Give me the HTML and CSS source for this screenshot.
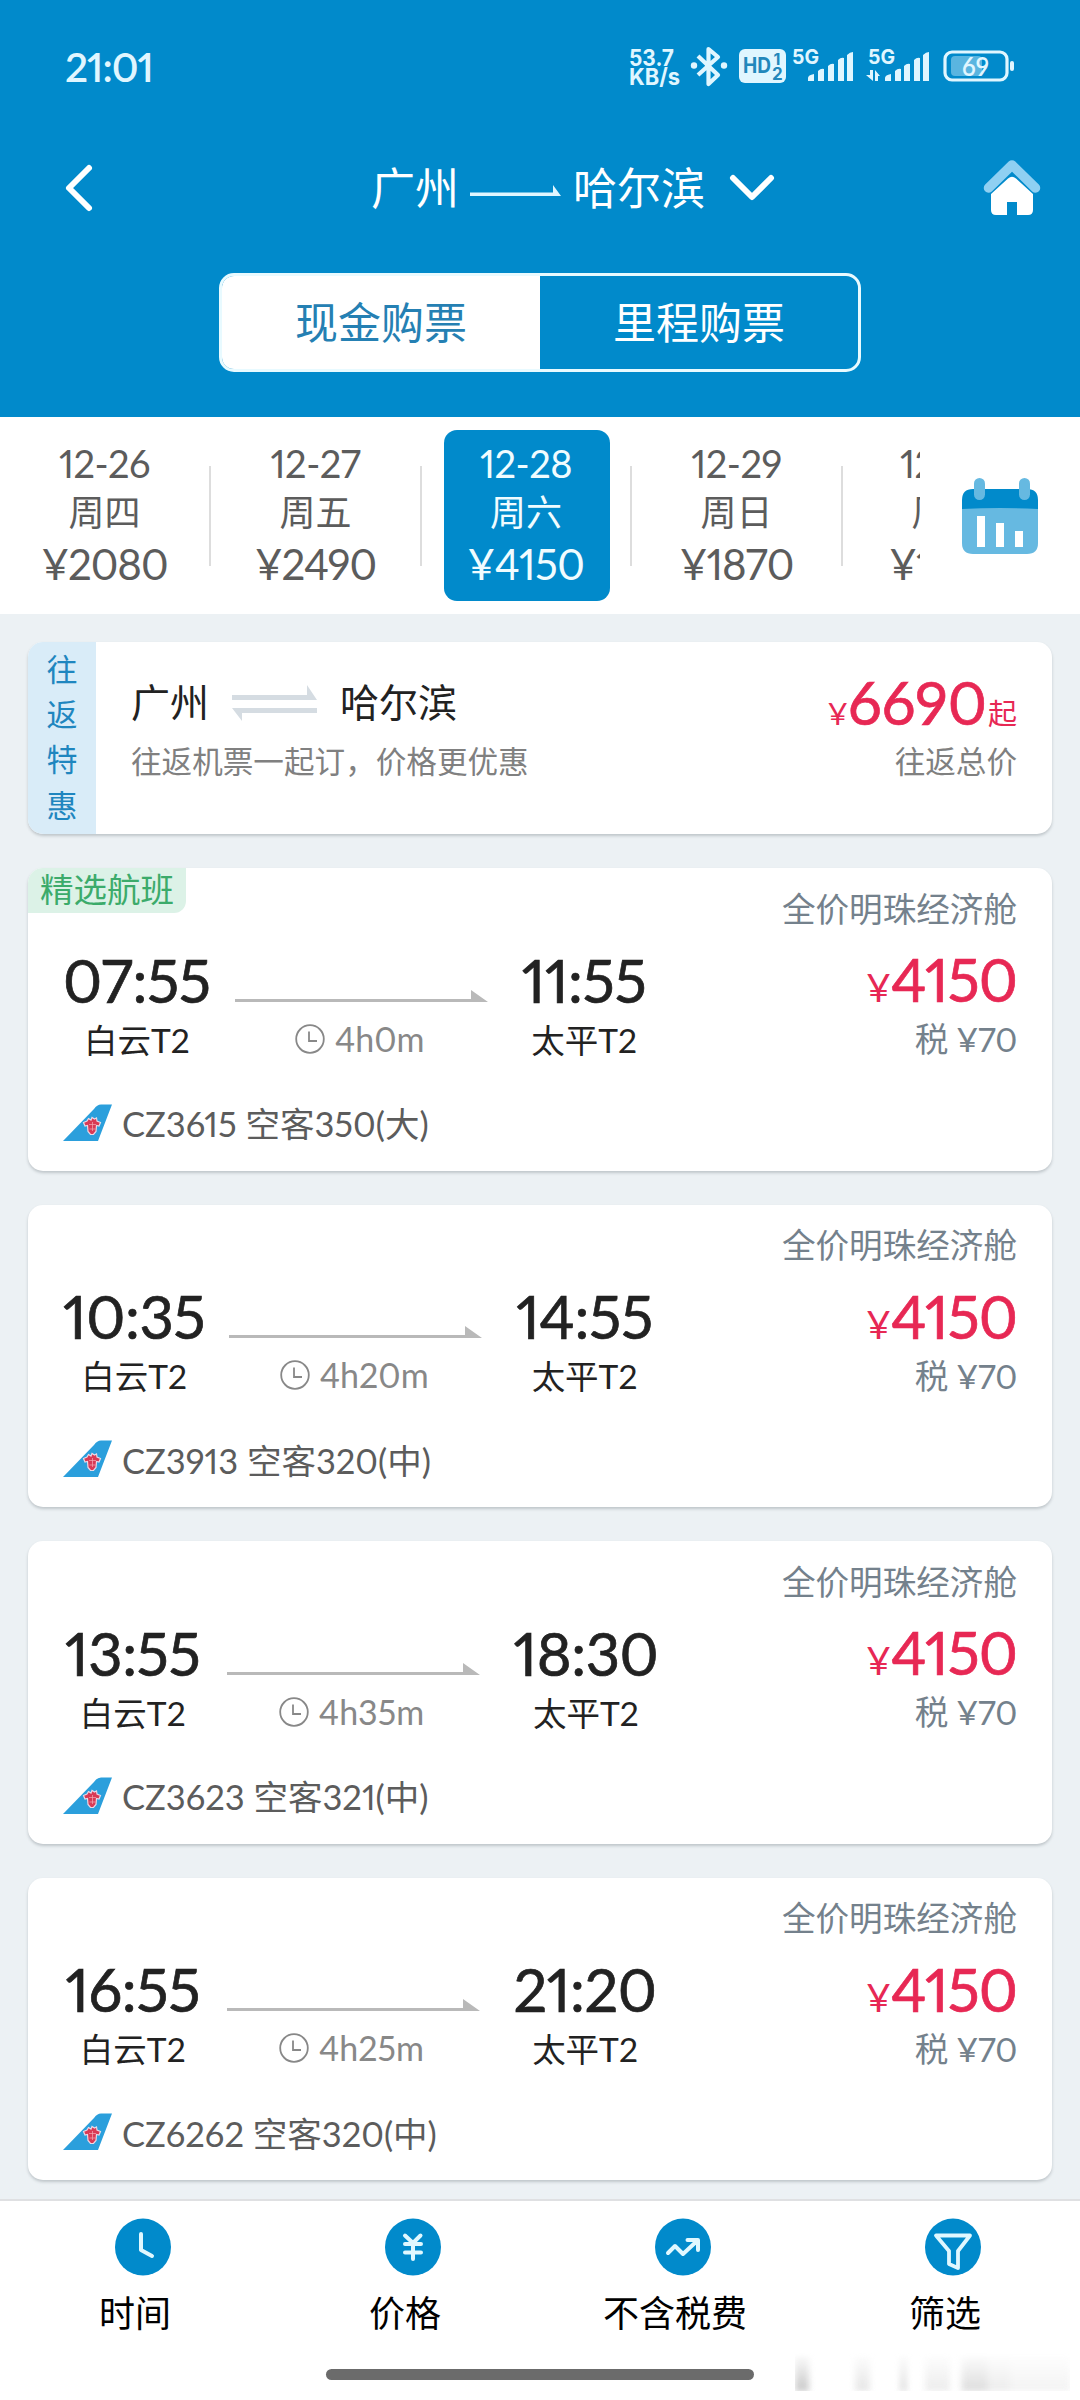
FILE: index.html
```html
<!DOCTYPE html>
<html lang="zh-CN">
<head>
<meta charset="utf-8">
<title>广州 - 哈尔滨</title>
<link rel="stylesheet" href="styles.css">
</head>
<body>
<svg class="defs" width="0" height="0">
  <symbol id="arrow" viewBox="0 0 253 12"><path d="M0 9H236V0L253 12H0Z"/></symbol>
  <symbol id="clock" viewBox="0 0 30 30"><circle cx="15" cy="15" r="13.8"/><path d="M14 7.500V17H22"/></symbol>
  <symbol id="tail" viewBox="0 0 50 37">
    <path d="M0 37L31 5Q34 .5 38 .5H49L35 37Z" fill="#2b9fdc"/>
    <path d="M25.500 14.500l2.500 1.500 1-2.500 2.500 1.500 2-1 .5 3 3.500 1.500-1.500 3.500-2.500-.5-.5 6-2.500 3h-3l-2.500-3-.5-6-2.500.5-1.500-3.500 3.500-1.500z" fill="#d93a55" stroke="#e9d8e6" stroke-width="1.200"/>
    <path d="M26 20.500h7M26.500 25h6M29.500 18v9" stroke="#f3a9b5" stroke-width=".7"/>
  </symbol>
</svg>
<div class="screen">
  <header class="header">
    <div class="status">
      <span class="status-time">21:01</span>
      <svg class="status-icons" width="400" height="50" viewBox="620 42 400 50">
        <g class="st-text">
          <text x="629" y="65.500" font-size="23" textLength="45" lengthAdjust="spacingAndGlyphs">53.7</text>
          <text x="629" y="85" font-size="23" textLength="51" lengthAdjust="spacingAndGlyphs">KB/s</text>
          <text x="792" y="63.500" font-size="20.500" textLength="27" lengthAdjust="spacingAndGlyphs">5G</text>
          <text x="868" y="63.500" font-size="20.500" textLength="27" lengthAdjust="spacingAndGlyphs">5G</text>
        </g>
        <path d="M698 56L718 75L708.500 84V49L718 57L698 75" fill="none" stroke="#e0f6ff" stroke-width="4.200" stroke-linejoin="round"/>
        <circle cx="694" cy="65.500" r="3.200"/><circle cx="724" cy="65.500" r="3.200"/>
        <rect x="739" y="49" width="47" height="34" rx="6"/>
        <g class="st-dark">
          <text x="743" y="73" font-size="21" textLength="28" lengthAdjust="spacingAndGlyphs">HD</text>
          <text x="773.500" y="65" font-size="16">1</text>
          <text x="772" y="79.500" font-size="17">2</text>
        </g>
        <path d="M808 81v-3q0-3 6-4v7zM818 81V71q3-3 6-2v12zM828 81V66q3-3 6-2v17zM838 81V60q3-3 6-2v23zM847 81V55q3-3 6-3v29z"/>
        <path d="M885 81v-3q0-3 6-4v7zM895 81V71q3-3 6-2v12zM904 81V66q3-3 6-2v17zM914 81V60q3-3 6-2v23zM923 81V55q3-3 6-3v29z"/>
        <path d="M870 70h3v11l-7-6h4zM875 81V70l5 6h-2v5z"/>
        <rect x="951" y="56" width="31" height="20" rx="4" opacity=".4"/>
        <rect x="945" y="52" width="62" height="28" rx="7" fill="none" stroke="#e0f6ff" stroke-width="3.200"/>
        <rect x="1010" y="61" width="4" height="10" rx="2"/>
        <text class="st-batt" x="962" y="76" font-size="26" textLength="27" lengthAdjust="spacingAndGlyphs">69</text>
      </svg>
    </div>
    <div class="nav">
      <svg class="back" width="30" height="50" viewBox="0 0 30 50"><path d="M25 5L5 25L25 45"/></svg>
      <div class="title">
        <span>广州</span>
        <svg class="title-arrow" width="91" height="12" viewBox="0 0 91 12"><path d="M0 8.500H83V1L91 12H0Z"/></svg>
        <span>哈尔滨</span>
        <svg class="chev" width="46" height="30" viewBox="0 0 46 30"><path d="M4 5L23 24L42 5"/></svg>
      </div>
      <svg class="home" width="58" height="58" viewBox="0 0 58 58">
        <path d="M5.500 30L29 7L52.500 30" fill="none" stroke="#8fd0f2" stroke-width="9.500" stroke-linecap="round" stroke-linejoin="round"/>
        <path d="M25 20.500Q29 17 33 20.500L50 36V52Q50 57 45 57H34V44H24V57H13Q8 57 8 52V36Z" fill="#fff"/>
      </svg>
    </div>
    <div class="tabs">
      <div class="tab tab-on">现金购票</div>
      <div class="tab">里程购票</div>
    </div>
  </header>

  <section class="dates">
    <div class="date-list">
      <div class="date"><b>12-26</b><i>周四</i><em>¥2080</em></div>
      <div class="date"><b>12-27</b><i>周五</i><em>¥2490</em></div>
      <div class="date date-on"><b>12-28</b><i>周六</i><em>¥4150</em></div>
      <div class="date"><b>12-29</b><i>周日</i><em>¥1870</em></div>
      <div class="date"><b>12-30</b><i>周一</i><em>¥1700</em></div>
    </div>
    <svg class="calendar" width="76" height="78" viewBox="0 0 76 78">
      <path d="M0 29H76V66Q76 77 65 77H11Q0 77 0 66Z" fill="#66b9e1"/>
      <path d="M0 32V23Q0 12 11 12H65Q76 12 76 23V32Q38 30 0 32Z" fill="#018acb"/>
      <rect x="12" y="1" width="11" height="22" rx="5.500" fill="#66b9e1"/><rect x="57" y="1" width="11" height="22" rx="5.500" fill="#66b9e1"/>
      <path d="M15 39h8v31h-8zM34 46h8v24h-8zM53 54h8v16h-8z" fill="#fff"/>
    </svg>
  </section>

  <main class="list">
    <article class="card promo">
      <div class="promo-side"><span>往</span><span>返</span><span>特</span><span>惠</span></div>
      <div class="promo-main">
        <div class="promo-route"><span>广州</span>
          <svg width="85" height="36" viewBox="0 0 85 36"><path d="M0 10H75V0L85 15H0ZM85 23V28H10V36L0 23Z"/></svg>
          <span>哈尔滨</span></div>
        <div class="promo-sub">往返机票一起订，价格更优惠</div>
      </div>
      <div class="promo-price">
        <div class="price"><small>¥</small><strong>6690</strong><span>起</span></div>
        <div class="promo-sub">往返总价</div>
      </div>
    </article>

    <article class="card flight">
      <div class="tag">精选航班</div>
      <div class="trip">
        <div class="stop"><strong class="time">07:55</strong><span>白云T2</span></div>
        <div class="leg"><svg class="leg-arrow"><use href="#arrow"/></svg><div class="dur"><svg><use href="#clock"/></svg>4h0m</div></div>
        <div class="stop"><strong class="time">11:55</strong><span>太平T2</span></div>
      </div>
      <div class="fare"><span class="cabin">全价明珠经济舱</span><div class="price"><small>¥</small><strong>4150</strong></div><span class="tax">税 ¥70</span></div>
      <div class="plane"><svg><use href="#tail"/></svg>CZ3615 空客350(大)</div>
    </article>

    <article class="card flight">
      <div class="trip">
        <div class="stop"><strong class="time">10:35</strong><span>白云T2</span></div>
        <div class="leg"><svg class="leg-arrow"><use href="#arrow"/></svg><div class="dur"><svg><use href="#clock"/></svg>4h20m</div></div>
        <div class="stop"><strong class="time">14:55</strong><span>太平T2</span></div>
      </div>
      <div class="fare"><span class="cabin">全价明珠经济舱</span><div class="price"><small>¥</small><strong>4150</strong></div><span class="tax">税 ¥70</span></div>
      <div class="plane"><svg><use href="#tail"/></svg>CZ3913 空客320(中)</div>
    </article>

    <article class="card flight">
      <div class="trip">
        <div class="stop"><strong class="time">13:55</strong><span>白云T2</span></div>
        <div class="leg"><svg class="leg-arrow"><use href="#arrow"/></svg><div class="dur"><svg><use href="#clock"/></svg>4h35m</div></div>
        <div class="stop"><strong class="time">18:30</strong><span>太平T2</span></div>
      </div>
      <div class="fare"><span class="cabin">全价明珠经济舱</span><div class="price"><small>¥</small><strong>4150</strong></div><span class="tax">税 ¥70</span></div>
      <div class="plane"><svg><use href="#tail"/></svg>CZ3623 空客321(中)</div>
    </article>

    <article class="card flight">
      <div class="trip">
        <div class="stop"><strong class="time">16:55</strong><span>白云T2</span></div>
        <div class="leg"><svg class="leg-arrow"><use href="#arrow"/></svg><div class="dur"><svg><use href="#clock"/></svg>4h25m</div></div>
        <div class="stop"><strong class="time">21:20</strong><span>太平T2</span></div>
      </div>
      <div class="fare"><span class="cabin">全价明珠经济舱</span><div class="price"><small>¥</small><strong>4150</strong></div><span class="tax">税 ¥70</span></div>
      <div class="plane"><svg><use href="#tail"/></svg>CZ6262 空客320(中)</div>
    </article>
  </main>

  <footer class="footer">
    <div class="tools">
      <div class="tool"><svg viewBox="0 0 56 58"><ellipse cx="28" cy="29" rx="28" ry="28.500"/><path d="M26 16V32L37 38" stroke-width="4"/></svg>时间</div>
      <div class="tool"><svg viewBox="0 0 56 58"><ellipse cx="28" cy="29" rx="28" ry="28.500"/><path d="M20 17.500L28 25L35.500 17.500M28 25V41M20 26H36M20 34.500H36" stroke-width="4"/></svg>价格</div>
      <div class="tool"><svg viewBox="0 0 56 58"><ellipse cx="28" cy="29" rx="28" ry="28.500"/><path d="M13 35L20 28L28 36L42 23M32.500 22H43V32" stroke-width="4"/></svg>不含税费</div>
      <div class="tool"><svg viewBox="0 0 56 58"><ellipse cx="28" cy="29" rx="28" ry="28.500"/><path d="M11 17.500H45L33 33V50L24 46V33Z" stroke-width="3.800"/></svg>筛选</div>
    </div>
    <div class="indicator"></div>
    <div class="smudge"></div>
  </footer>
</div>
</body>
</html>
```
FILE: styles.css
```css
* { box-sizing: border-box; margin: 0; padding: 0; }
body {
  width: 1080px;
  font-family: Lato, "Noto Sans CJK SC", sans-serif;
  font-feature-settings: "pnum";
  color: #222;
}
b, i, em, strong, small { font-weight: 400; font-style: normal; }
svg { flex: none; display: block; }
.defs { position: absolute; }
.screen { display: flex; flex-direction: column; height: 2400px; overflow: hidden; background: #ecf1f4; }

.header { height: 417px; flex: none; background: #018acb; color: #fff; }
.status { height: 133px; display: flex; align-items: center; justify-content: space-between; padding: 0 60px 0 65px; }
.status-time { font-size: 40.500px; font-weight: 600; color: #e0f6ff; letter-spacing: -1px; }
.status-icons { fill: #e0f6ff; }
.st-text { font-family: Inter, sans-serif; font-weight: 700; }
.st-dark { font-family: Inter, sans-serif; font-weight: 700; fill: #2287bb; }
.st-batt { font-weight: 600; }
.nav { height: 110px; display: flex; align-items: center; padding: 0 39px 0 64px; }
.back, .chev { fill: none; stroke: #fff; stroke-width: 6; stroke-linecap: round; stroke-linejoin: round; }
.title { flex: 1; display: flex; align-items: center; margin-left: 277px; font-size: 44px; line-height: 60px; }
.title-arrow { margin: 4px 12px 0 11px; fill: #e0f6ff; }
.chev { margin-left: 24px; }
.home { margin-top: -2px; }
.tabs { width: 642px; height: 99px; margin: 30px auto 0; border: 3px solid #e8faff; border-radius: 15px; display: flex; overflow: hidden; }
.tab { flex: 1; display: flex; align-items: center; justify-content: center; padding-bottom: 5px; font-size: 43px; }
.tab-on { background: #fff; color: #2580b3; }

.dates { height: 197px; flex: none; display: flex; align-items: flex-start; background: #fff; }
.date-list { width: 920px; display: flex; overflow: hidden; padding-top: 13px; }
.date {
  width: 211px; height: 171px; padding: 8px 2px 0 0; flex: none;
  display: flex; flex-direction: column; align-items: center;
  color: #5c5c5c;
  background: linear-gradient(#ddd, #ddd) right 36px / 2px 100px no-repeat;
}
.date b { font-size: 38px; line-height: 50px; letter-spacing: -.5px; }
.date i { font-size: 36px; line-height: 48px; }
.date em { font-size: 42px; line-height: 56px; letter-spacing: -1.100px; }
.date-on { width: 166px; margin: 0 22px 0 22px; border-radius: 13px; background: #018acb; color: #f0fcff; }
.date-on em { letter-spacing: -.5px; }
.calendar { margin: 60px 0 0 42px; }
.date-on + .date { position: relative; }
.date-on + .date::before { content: ""; position: absolute; left: -2px; top: 36px; width: 2px; height: 100px; background: #ddd; }

.list { flex: 1; min-height: 0; overflow: hidden; padding: 28px 28px 0; display: flex; flex-direction: column; gap: 34px; }
.card { flex: none; background: #fff; border-radius: 15px; box-shadow: 0 2px 3px rgba(60, 70, 80, .25); overflow: hidden; }
.promo { height: 192px; display: flex; }
.promo-side { width: 68px; padding-top: 5px; background: #d9ecf8; color: #1f86bf; display: flex; flex-direction: column; align-items: center; font-size: 31px; line-height: 45.200px; }
.promo-main { padding: 31px 0 0 35px; }
.promo-route { display: flex; align-items: center; font-size: 39px; line-height: 60px; height: 60px; }
.promo-route svg { margin: 0 23px 0 23px; fill: #d5dce2; }
.promo-route span { margin-top: -2px; }
.promo-sub { font-size: 30.600px; line-height: 58px; color: #808080; }
.promo-price { margin-left: auto; padding: 31px 35px 0 0; text-align: right; }
.price { display: flex; align-items: baseline; justify-content: flex-end; color: #e72854; }
.price strong { font-size: 59.500px; line-height: 76px; letter-spacing: -1px; -webkit-text-stroke: .7px currentColor; }
.price small { font-size: 38px; }
.promo-price .price { height: 60px; align-items: baseline; }
.promo-price .price strong { line-height: 58px; letter-spacing: 0; }
.promo-price .price small { font-size: 31px; }
.promo-price .price span { font-size: 29px; margin-left: 1px; }

.flight { position: relative; height: 302.500px; display: grid; grid-template-columns: auto 1fr; align-content: start; padding: 16.500px 35px 0 35px; }
.tag { position: absolute; left: 0; top: 0; width: 158px; height: 45px; padding-left: 12px; font-size: 33.500px; line-height: 43px; color: #3cab6b; background: #dcf2e7; border-radius: 0 0 12px 0; white-space: nowrap; }
.trip { display: flex; padding-top: 58px; }
.stop { display: flex; flex-direction: column; align-items: center; font-size: 33.500px; line-height: 42px; }
.stop:first-child { min-width: 139.500px; }
.time { font-size: 59.500px; line-height: 74px; margin-bottom: 2px; letter-spacing: -.4px; -webkit-text-stroke: .7px currentColor; }
.leg { width: 253px; margin: 47px 34px 0 24px; display: flex; flex-direction: column; align-items: center; }
.leg-arrow { width: 253px; height: 12px; fill: #b9b9b9; }
.dur { display: flex; align-items: center; gap: 10px; margin-top: 16px; margin-right: 3px; font-size: 34px; line-height: 42px; color: #888; }
.dur svg { width: 30px; height: 30px; fill: none; stroke: #888; stroke-width: 1.800; }
.fare { display: flex; flex-direction: column; align-items: flex-end; color: #74818c; }
.cabin { font-size: 33.600px; line-height: 48px; }
.fare .price { margin: 8.500px 0 1px; }
.tax { font-size: 33.600px; line-height: 43px; letter-spacing: -.4px; }
.plane { grid-column: 1 / 3; display: flex; align-items: center; gap: 9px; margin-top: 40px; font-size: 34.500px; line-height: 46px; color: #5c5c5c; white-space: pre; }
.plane svg { width: 50px; height: 37px; margin-top: -4px; }

.footer { position: relative; height: 201px; flex: none; background: #fff; border-top: 2px solid #dfe0e2; }
.tools { display: flex; padding-top: 17px; }
.tool { width: 270px; display: flex; flex-direction: column; align-items: center; font-size: 36px; line-height: 50px; color: #000; }
.tool svg { width: 56px; height: 58px; margin: 0 0 12px 16px; fill: #018acb; }
.tool path { stroke: #e0f8ff; stroke-linecap: round; stroke-linejoin: round; }
.indicator { width: 428px; height: 11px; border-radius: 6px; background: #6b6b6b; margin: 31px auto 0; }
.smudge {
  position: absolute; left: 795px; top: 152px; width: 275px; height: 38px; filter: blur(3px);
  background: linear-gradient(90deg, #c8c8c8 0 14px, transparent 14px 60px, #e6e6e6 60px 75px, transparent 75px 105px, #ddd 105px 112px, transparent 112px 130px, #ececec 130px 155px, transparent 155px 165px, #dcdcdc 168px 190px, #ececec 195px 215px, #f3f3f3 215px);
  -webkit-mask-image: linear-gradient(transparent, #000);
  mask-image: linear-gradient(transparent, #000);
}
```
